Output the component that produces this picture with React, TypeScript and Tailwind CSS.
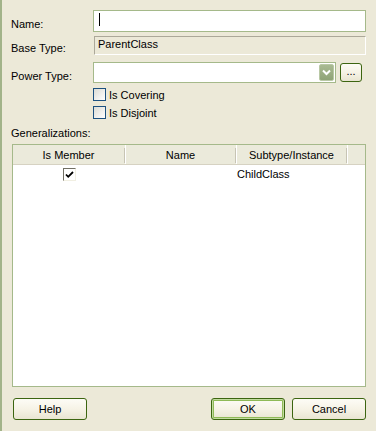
import React from "react";

function XpCheck() {
  return (
    <span className="block w-[13px] h-[13px] border border-[#1c5180] bg-gradient-to-br from-[#dcdcd5] to-white" />
  );
}

function XpButton({label, isDefault = false, className = ""}: {label: string; isDefault?: boolean; className?: string}) {
  const ring = isDefault
    ? "shadow-[inset_0_0_0_1px_#c2dc9f,inset_0_0_0_2px_#8fba57]"
    : "";
  return (
    <button
      className={`h-[22px] rounded-[3px] border border-[#3c6510] bg-gradient-to-b from-[#fdfcf6] via-[#f6f3e6] to-[#e9e5d2] text-[11px] text-black flex items-center justify-center ${ring} ${className}`}
    >
      {label}
    </button>
  );
}

export default function App() {
  return (
    <div className="w-[376px] h-[431px] overflow-hidden bg-[#ece9d8] border-l-2 border-[#a2b389] pl-[9px] pt-[10px] text-[11px] leading-[13px] text-black font-['Liberation_Sans',Arial,sans-serif]">
      {/* Name */}
      <div className="flex items-start h-[22px]">
        <span className="w-[82px] mt-[8px]">Name:</span>
        <div className="w-[273px] h-[22px] border border-[#a5b98a] bg-white pl-[5px] pt-[2px]">
          <span className="block w-[1px] h-[13px] bg-black" />
        </div>
      </div>

      {/* Base Type */}
      <div className="flex items-start h-[19px] mt-[4px]">
        <span className="w-[82px] mt-[6px]">Base Type:</span>
        <div className="ml-[1px] w-[272px] h-[19px] border-t border-l border-t-[#aca899] border-l-[#aca899] border-b border-r border-b-white border-r-white pl-[3px] pt-[1px]">
          ParentClass
        </div>
      </div>

      {/* Power Type */}
      <div className="flex items-start h-[21px] mt-[7px]">
        <span className="w-[82px] mt-[8px]">Power Type:</span>
        <div className="w-[243px] h-[21px] border border-[#a5b98a] bg-white flex justify-end items-center pr-[1px]">
          <span className="w-[15px] h-[17px] rounded-[2px] border border-[#b9c8a5] bg-gradient-to-b from-[#a9ba92] to-[#8fa377] flex items-center justify-center">
            <svg width="9" height="7" viewBox="0 0 9 7">
              <polyline points="1,1.5 4.5,5 8,1.5" fill="none" stroke="white" strokeWidth="2" />
            </svg>
          </span>
        </div>
        <XpButton label="..." className="ml-[4px] mt-[1px] w-[22px] !h-[19px] leading-[10px] pb-[3px]" />
      </div>

      {/* Checkboxes */}
      <div className="flex items-center h-[13px] mt-[5px] ml-[82px]">
        <XpCheck />
        <span className="ml-[3px] mt-[1px]">Is Covering</span>
      </div>
      <div className="flex items-center h-[13px] mt-[5px] ml-[82px]">
        <XpCheck />
        <span className="ml-[3px] mt-[1px]">Is Disjoint</span>
      </div>

      <div className="mt-[8px] h-[13px]">Generalizations:</div>

      {/* Table */}
      <div className="ml-[1px] mt-[4px] w-[354px] h-[243px] border border-[#a5b98a] bg-white flex flex-col">
        <div className="h-[20px] flex bg-[#ebeadb] border-b border-[#d6d2c2]">
          <div className="w-[112px] flex items-center pt-[2px]">
            <span className="flex-1 text-center">Is Member</span>
            <span className="w-[1px] h-[15px] bg-[#c7c4b4]" />
          </div>
          <div className="w-[111px] flex items-center pt-[2px] border-l border-white">
            <span className="flex-1 text-center">Name</span>
            <span className="w-[1px] h-[15px] bg-[#c7c4b4]" />
          </div>
          <div className="w-[111px] flex items-center pt-[2px] border-l border-white">
            <span className="flex-1 text-center">Subtype/Instance</span>
            <span className="w-[1px] h-[15px] bg-[#c7c4b4]" />
          </div>
          <div className="flex-1 border-l border-white" />
        </div>
        <div className="flex h-[19px] items-center">
          <div className="w-[112px] flex justify-center">
            <span className="w-[13px] h-[13px] border-t border-l border-t-[#716f64] border-l-[#716f64] border-b border-r border-b-[#f1efe2] border-r-[#f1efe2] bg-white flex items-center justify-center">
              <svg width="9" height="8" viewBox="0 0 9 8">
                <polyline points="1,3.5 3.2,5.8 8,1" fill="none" stroke="black" strokeWidth="1.8" />
              </svg>
            </span>
          </div>
          <div className="w-[112px]" />
          <div className="pl-[0px]">ChildClass</div>
        </div>
      </div>

      {/* Buttons */}
      <div className="flex mt-[11px] h-[22px]">
        <XpButton label="Help" className="ml-[2px] w-[74px]" />
        <XpButton label="OK" isDefault className="ml-[124px] w-[74px]" />
        <XpButton label="Cancel" className="ml-[7px] w-[74px]" />
      </div>
    </div>
  );
}
